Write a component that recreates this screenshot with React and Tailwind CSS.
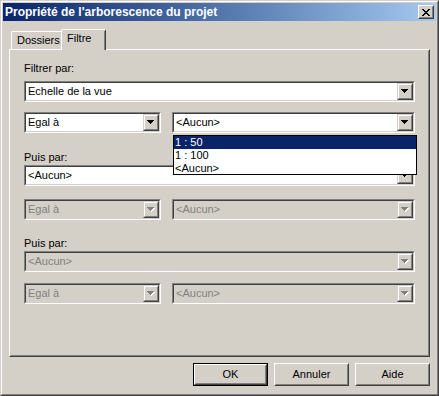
import React from "react";

function Arrow({ disabled }) {
  return (
    <svg width="8" height="5" viewBox="0 0 8 5" className="block" shapeRendering="crispEdges">
      {disabled && <path d="M1 1h7v1h-1v1h-1v1h-1v1h-1v-1h-1v-1h-1v-1h-1z" fill="#ffffff" />}
      <path d="M0 0h7v1h-1v1h-1v1h-1v1h-1v-1h-1v-1h-1v-1h-1z" fill={disabled ? "#808080" : "#000000"} />
    </svg>
  );
}

function DropBtn({ disabled }) {
  return (
    <div className="w-[16px] h-full border border-t-[#d4d0c8] border-l-[#d4d0c8] border-r-[#404040] border-b-[#404040]">
      <div className="h-full w-full flex items-center justify-center bg-[#d4d0c8] border border-t-white border-l-white border-r-[#808080] border-b-[#808080]">
        <Arrow disabled={disabled} />
      </div>
    </div>
  );
}

function Combo({ text, disabled, className = "" }) {
  return (
    <div className={`h-[21px] flex border border-t-[#808080] border-l-[#808080] border-r-white border-b-white ${className}`}>
      <div className={`flex flex-1 border border-t-[#404040] border-l-[#404040] border-r-[#d4d0c8] border-b-[#d4d0c8] ${disabled ? "bg-[#d4d0c8]" : "bg-white"}`}>
        <div className={`flex-1 pl-[2px] leading-[17px] whitespace-nowrap ${disabled ? "text-[#808080]" : "text-black"}`}>{text}</div>
        <DropBtn disabled={disabled} />
      </div>
    </div>
  );
}

function Btn({ label, def }) {
  const inner = (
    <div className="h-full w-full border border-t-white border-l-white border-r-[#404040] border-b-[#404040]">
      <div className="h-full w-full flex items-center justify-center border border-t-[#d4d0c8] border-l-[#d4d0c8] border-r-[#808080] border-b-[#808080]">
        {label}
      </div>
    </div>
  );
  return def ? (
    <div className="w-[75px] h-[23px] border border-black">{inner}</div>
  ) : (
    <div className="w-[75px] h-[23px]">{inner}</div>
  );
}

export default function App() {
  return (
    <div className="w-[439px] h-[396px] bg-[#d4d0c8] font-['Liberation_Sans',Arial,sans-serif] text-[11px] text-black border border-t-[#d4d0c8] border-l-[#d4d0c8] border-r-[#404040] border-b-[#404040]">
      <div className="h-full w-full border border-t-white border-l-white border-r-[#808080] border-b-[#808080] p-[1px] flex flex-col">
        {/* title bar */}
        <div className="h-[18px] flex items-center bg-gradient-to-r from-[#0a246a] to-[#a6caf0] pl-[2px] pr-[2px]">
          <div className="flex-1 text-white font-bold text-[12px] leading-[18px] whitespace-nowrap">Propriété de l'arborescence du projet</div>
          <div className="w-[16px] h-[14px] bg-[#d4d0c8] border border-t-white border-l-white border-r-[#404040] border-b-[#404040]">
            <div className="h-full w-full flex items-center justify-center border border-t-[#d4d0c8] border-l-[#d4d0c8] border-r-[#808080] border-b-[#808080]">
              <svg width="8" height="7" viewBox="0 0 8 7" shapeRendering="crispEdges" className="block">
                <path d="M0 0h2v1h-2zM6 0h2v1h-2zM1 1h2v1h-2zM5 1h2v1h-2zM2 2h4v1h-4zM3 3h2v1h-2zM2 4h4v1h-4zM1 5h2v1h-2zM5 5h2v1h-2zM0 6h2v1h-2zM6 6h2v1h-2z" fill="#000" />
              </svg>
            </div>
          </div>
        </div>
        {/* body */}
        <div className="flex-1 flex flex-col px-[6px] pt-[8px] pb-[7px]">
          <div className="h-[20px] flex items-end pl-[2px]">
            <div className="w-[51px] h-[18px] border-t border-l border-t-white border-l-white border-r border-r-[#404040] rounded-tl-[2px] rounded-tr-[2px] pl-[5px] leading-[16px]">
              Dossiers
            </div>
            <div className="relative z-10 -ml-[1px] -mb-[1px] w-[45px] h-[21px] bg-[#d4d0c8] border-t border-l border-t-white border-l-white border-r border-r-[#404040] rounded-tl-[2px] rounded-tr-[2px] pl-[5px] leading-[16px]">
              <div className="absolute right-0 top-[1px] bottom-0 w-[1px] bg-[#808080]" />
              Filtre
            </div>
          </div>
          <div className="relative h-[308px] border border-t-white border-l-white border-r-[#404040] border-b-[#404040]">
            <div className="h-full w-full border border-t-[#d4d0c8] border-l-[#d4d0c8] border-r-[#808080] border-b-[#808080] px-[13px] pt-[10px] flex flex-col">
              <div className="h-[14px] leading-[14px]">Filtrer par:</div>
              <Combo text="Echelle de la vue" className="mt-[6px]" />
              <div className="flex gap-[11px] mt-[10px]">
                <Combo text="Egal à" className="w-[137px]" />
                <Combo text="<Aucun>" className="flex-1" />
              </div>
              <div className="h-[14px] leading-[14px] mt-[17px]">Puis par:</div>
              <Combo text="<Aucun>" className="mt-[1px]" />
              <div className="flex gap-[11px] mt-[13px]">
                <Combo text="Egal à" disabled className="w-[137px]" />
                <Combo text="<Aucun>" disabled className="flex-1" />
              </div>
              <div className="h-[14px] leading-[14px] mt-[16px]">Puis par:</div>
              <Combo text="<Aucun>" disabled className="mt-[1px]" />
              <div className="flex gap-[11px] mt-[11px]">
                <Combo text="Egal à" disabled className="w-[137px]" />
                <Combo text="<Aucun>" disabled className="flex-1" />
              </div>
            </div>
            {/* dropdown list overlay */}
            <div className="absolute left-[163px] top-[85px] w-[244px] h-[40px] bg-white border border-black leading-[13px]">
              <div className="bg-[#0a246a] text-white pl-[1px]">1 : 50</div>
              <div className="pl-[1px]">1 : 100</div>
              <div className="pl-[1px]">&lt;Aucun&gt;</div>
            </div>
          </div>
          <div className="mt-[6px] flex justify-end gap-[6px]">
            <Btn label="OK" def />
            <Btn label="Annuler" />
            <Btn label="Aide" />
          </div>
        </div>
      </div>
    </div>
  );
}
